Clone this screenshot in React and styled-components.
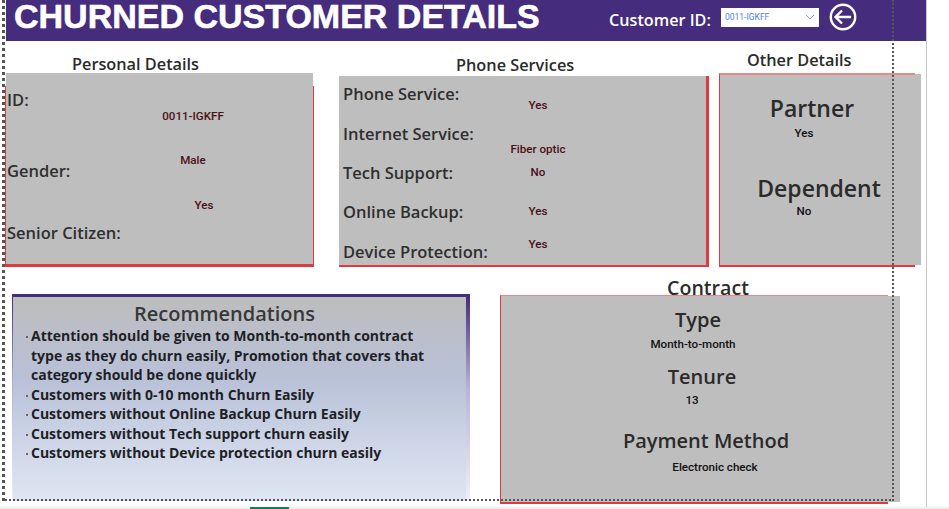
import styled, { createGlobalStyle } from 'styled-components';

const colors = {
  purple: '#452c7c',
  panel: '#bebebe',
  red: '#e03a3e',
  ink: '#2b2b2b',
  maroon: '#4a1015',
};

const GlobalStyle = createGlobalStyle`
  html, body {
    margin: 0;
    background: #fff;
  }
`;

const Page = styled.div`
  position: relative;
  width: 949px;
  height: 509px;
  overflow: hidden;
  background: #fff;
  font-family: 'Open Sans', 'Liberation Sans', sans-serif;
  color: ${colors.ink};
`;

const Canvas = styled.div`
  width: 920px;
  height: 507px;
  margin-left: 6px;
  border-right: 1px solid #c8c8c8;
`;

const Header = styled.header`
  display: flex;
  align-items: center;
  height: 41px;
  background: ${colors.purple};
  color: #fff;
`;

const Title = styled.h1`
  flex: none;
  align-self: flex-start;
  width: 595px;
  margin: 0 0 0 8px;
  font: 700 34px/33px 'Liberation Sans', Arial, sans-serif;
  -webkit-text-stroke: 0.6px #fff;
  white-space: nowrap;
`;

const FilterLabel = styled.span`
  width: 112px;
  margin-top: -1px;
  font-size: 16.2px;
  font-weight: 600;
  white-space: nowrap;
`;

const Select = styled.div`
  display: flex;
  align-items: center;
  justify-content: space-between;
  box-sizing: border-box;
  width: 98px;
  height: 19px;
  margin-top: -7px;
  padding: 0 4px;
  background: #fff;
  color: #4f7df0;
  font: 400 8.5px/19px Roboto, sans-serif;
`;

const BackButton = styled.svg`
  width: 28px;
  height: 28px;
  margin: -7px 0 0 10px;
`;

const TopRow = styled.section`
  display: flex;
  height: 224px;
`;

const Column = styled.div`
  display: grid;
  grid-template-rows: ${p => p.$head}px 1fr;
  grid-template-columns: minmax(0, 1fr);
  width: ${p => p.$width}px;
  margin-left: ${p => p.$left}px;
`;

const Heading = styled.h2`
  align-self: end;
  margin: 0 0 ${p => p.$lift}px ${p => p.$indent}px;
  font-size: ${p => p.$size || 16.3}px;
  font-weight: 600;
  line-height: 18px;
  white-space: nowrap;
`;

const Panel = styled.div`
  position: relative;
  height: ${p => (p.$height ? `${p.$height}px` : 'auto')};
  background: ${colors.panel};

  &::after {
    content: '';
    position: absolute;
    inset: ${p => p.$frame};
    border-style: solid;
    border-color: ${colors.red};
    border-top-color: #e48a8a;
    border-width: ${p => p.$edges};
    pointer-events: none;
  }
`;

const Rows = styled.div`
  padding: 8px 0 0 4px;
`;

const Row = styled.div`
  display: grid;
  grid-template-columns: 155px 80px;
  align-items: start;
  height: ${p => p.$height}px;
`;

const Label = styled.div`
  margin: ${p => p.$top || 0}px 0 0 ${p => p.$left || 0}px;
  font-size: 16.5px;
  font-weight: 600;
  line-height: 20px;
  color: #2f2f2f;
  white-space: nowrap;
`;

const Value = styled.div`
  width: ${p => (p.$center ? `${p.$center * 2}px` : 'auto')};
  margin-top: ${p => p.$top || 0}px;
  font: 500 11.6px/14px Roboto, sans-serif;
  color: ${p => (p.$dark ? '#111' : colors.maroon)};
  text-align: center;
  white-space: nowrap;
`;

const BigTitle = styled.div`
  width: ${p => p.$center * 2}px;
  margin-top: ${p => p.$top}px;
  font-size: ${p => p.$size}px;
  font-weight: 600;
  line-height: ${p => p.$line}px;
  text-align: center;
  white-space: nowrap;
`;

const BottomRow = styled.section`
  display: flex;
  align-items: flex-start;
`;

const Recommendations = styled.div`
  box-sizing: border-box;
  width: 458px;
  height: 207px;
  margin: 29px 0 0 6px;
  padding-top: 5px;
  border-style: solid;
  border-width: 3px 4px 0 1px;
  border-image: linear-gradient(${colors.purple}, #b9b4d8 45%, #eef1f8) 1;
  background: linear-gradient(#bdbdbd, #b9c1d8 40%, #dfe7f4 100%);
`;

const RecTitle = styled.h3`
  margin: 0;
  padding-right: 30px;
  font-size: 20px;
  font-weight: 600;
  line-height: 24px;
  text-align: center;
  color: #383838;
`;

const RecList = styled.ul`
  width: 415px;
  margin: 0;
  padding: 0 0 0 13px;
  box-sizing: border-box;
  list-style: none;
`;

const RecItem = styled.li`
  display: flex;
  font-size: 14px;
  font-weight: 700;
  line-height: 19.5px;
  color: #1f1f26;

  &::before {
    content: '';
    flex: none;
    width: 2px;
    height: 2px;
    margin: 10px 3px 0 0;
    border-radius: 50%;
    background: #444;
  }
`;

const Guides = styled.div`
  position: absolute;
  top: 0;
  left: 2px;
  width: 887px;
  height: 499px;
  border-style: dotted;
  border-color: #555;
  border-width: 0 2px 2px 3px;
  pointer-events: none;
`;

const TabStrip = styled.div`
  position: absolute;
  left: 0;
  right: 0;
  bottom: 0;
  height: 2px;
  background: #f0f0f0;
`;

const ActiveTab = styled.div`
  width: 39px;
  height: 2px;
  margin-left: 250px;
  background: #1a7a5e;
`;

const recommendations = [
  'Attention should be given to Month-to-month contract type as they do churn easily, Promotion that covers that category should be done quickly',
  'Customers with 0-10 month Churn Easily',
  'Customers without Online Backup Churn Easily',
  'Customers without Tech support churn easily',
  'Customers without Device protection churn easily',
];

const services = [
  { label: 'Phone Service:', value: 'Yes', top: 14, height: 40 },
  { label: 'Internet Service:', value: 'Fiber optic', top: 18, height: 39 },
  { label: 'Tech Support:', value: 'No', top: 2, height: 39 },
  { label: 'Online Backup:', value: 'Yes', top: 2, height: 40 },
  { label: 'Device Protection:', value: 'Yes', top: -5, height: 23 },
];

export default function App() {
  return (
    <Page>
      <GlobalStyle />
      <Canvas>
        <Header>
          <Title>CHURNED CUSTOMER DETAILS</Title>
          <FilterLabel>Customer ID:</FilterLabel>
          <Select>
            <span>0011-IGKFF</span>
            <svg width="10" height="6" viewBox="0 0 10 6" fill="none" stroke="#7f9ad8" strokeWidth="1">
              <path d="M1 1l4 4 4-4" />
            </svg>
          </Select>
          <BackButton viewBox="0 0 28 28" fill="none" stroke="#fff" strokeWidth="2.4">
            <circle cx="14" cy="14" r="12.2" />
            <path d="M22 14H7M13 7.5L6.5 14l6.5 6.5" />
          </BackButton>
        </Header>

        <TopRow>
          <Column $width={307} $left={0} $head={32}>
            <Heading $lift={0} $indent={66}>Personal Details</Heading>
            <Panel $frame="13px -1px -2px -1px" $edges="0 1px 3px 1px">
              <Label $top={17} $left={1}>ID:</Label>
              <Value $center={187} $top={-1}>0011-IGKFF</Value>
              <Value $center={187} $top={30}>Male</Value>
              <Label $top={-6} $left={1}>Gender:</Label>
              <Value $center={198} $top={17}>Yes</Value>
              <Label $top={11} $left={1}>Senior Citizen:</Label>
            </Panel>
          </Column>

          <Column $width={367} $left={26} $head={35}>
            <Heading $lift={2} $indent={117}>Phone Services</Heading>
            <Panel $frame="0 -3px -2px 0" $edges="0 3px 2px 0">
              <Rows>
                {services.map(item => (
                  <Row key={item.label} $height={item.height}>
                    <Label>{item.label}</Label>
                    <Value $top={item.top}>{item.value}</Value>
                  </Row>
                ))}
              </Rows>
            </Panel>
          </Column>

          <Column $width={201} $left={14} $head={33}>
            <Heading $lift={5} $indent={27}>Other Details</Heading>
            <Panel $frame="-1px 6px -2px -1px" $edges="2px 0 2px 1px">
              <BigTitle $center={92} $top={19} $size={23} $line={30}>Partner</BigTitle>
              <Value $center={84} $top={3} $dark>Yes</Value>
              <BigTitle $center={99} $top={33} $size={23} $line={30}>Dependent</BigTitle>
              <Value $center={84} $top={1} $dark>No</Value>
            </Panel>
          </Column>
        </TopRow>

        <BottomRow>
          <Recommendations>
            <RecTitle>Recommendations</RecTitle>
            <RecList>
              {recommendations.map(text => (
                <RecItem key={text}>
                  <span>{text}</span>
                </RecItem>
              ))}
            </RecList>
          </Recommendations>

          <Column $width={399} $left={31} $head={31}>
            <Heading $lift={-1} $indent={166} $size={19.6}>Contract</Heading>
            <Panel $height={206} $frame="-1px 12px -2px -1px" $edges="1px 0 2px 1px">
              <BigTitle $center={197} $top={11} $size={20} $line={26}>Type</BigTitle>
              <Value $center={192} $top={4} $dark>Month-to-month</Value>
              <BigTitle $center={201} $top={13} $size={20} $line={26}>Tenure</BigTitle>
              <Value $center={191} $top={3} $dark>13</Value>
              <BigTitle $center={205} $top={21} $size={20} $line={26}>Payment Method</BigTitle>
              <Value $center={214} $top={6} $dark>Electronic check</Value>
            </Panel>
          </Column>
        </BottomRow>
      </Canvas>

      <Guides />
      <TabStrip>
        <ActiveTab />
      </TabStrip>
    </Page>
  );
}
